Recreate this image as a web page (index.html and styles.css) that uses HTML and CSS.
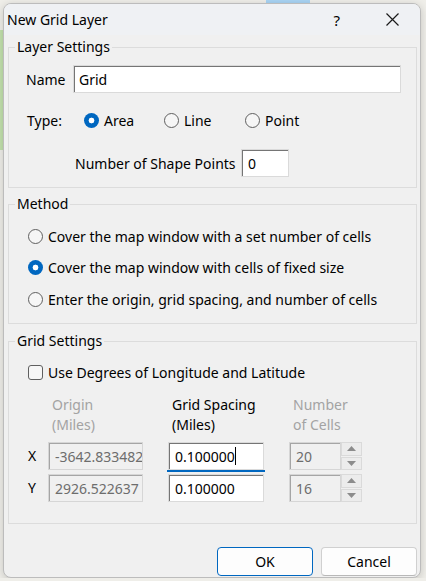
FILE: index.html
```html
<!DOCTYPE html>
<html lang="en">
<head>
    <meta charset="UTF-8">
    <meta name="viewport" content="width=device-width, initial-scale=1.0">
    <title>New Grid Layer</title>
    <link rel="stylesheet" href="styles.css">
</head>
<body>
    <div class="dialog">
        <div class="titlebar">
            <span class="title">New Grid Layer</span>
            <span class="help">?</span>
            <svg class="close" width="13" height="13" viewBox="0 0 13 13">
                <path d="M0.5 0.5 L12.5 12.5 M12.5 0.5 L0.5 12.5" stroke="#1a1a1a" stroke-width="1.2" fill="none"/>
            </svg>
        </div>

        <div class="content">
            <fieldset class="group layer">
                <legend>Layer Settings</legend>
                <div class="name-row">
                    <label class="name-label" for="layerName">Name</label>
                    <input class="edit name-edit" id="layerName" type="text" value="Grid">
                </div>
                <div class="type-row">
                    <span class="type-label">Type:</span>
                    <label class="opt opt-area"><input type="radio" name="shape" checked>Area</label>
                    <label class="opt opt-line"><input type="radio" name="shape">Line</label>
                    <label class="opt"><input type="radio" name="shape">Point</label>
                </div>
                <div class="points-row">
                    <label class="points-label" for="shapePoints">Number of Shape Points</label>
                    <input class="edit points-edit" id="shapePoints" type="text" value="0">
                </div>
            </fieldset>

            <fieldset class="group method">
                <legend>Method</legend>
                <label class="opt"><input type="radio" name="method">Cover the map window with a set number of cells</label>
                <label class="opt"><input type="radio" name="method" checked>Cover the map window with cells of fixed size</label>
                <label class="opt"><input type="radio" name="method">Enter the origin, grid spacing, and number of cells</label>
            </fieldset>

            <fieldset class="group grid">
                <legend>Grid Settings</legend>
                <label class="opt"><input type="checkbox">Use Degrees of Longitude and Latitude</label>

                <div class="coords">
                    <span></span>
                    <span class="head off">Origin<br>(Miles)</span>
                    <span class="head">Grid Spacing<br>(Miles)</span>
                    <span class="head off">Number<br>of Cells</span>

                    <span class="axis">X</span>
                    <input class="edit origin-edit" type="text" value="-3642.833482" disabled>
                    <div class="focus-wrap">
                        <input class="edit spacing-edit" type="text" value="0.100000">
                        <span class="caret"></span>
                    </div>
                    <div class="count">
                        <input class="edit count-edit" type="text" value="20" disabled>
                        <div class="spin">
                            <button class="spin-btn" disabled><svg width="9" height="5" viewBox="0 0 9 5"><path d="M0 5 L4.5 0 L9 5 Z" fill="#8c8c8c"/></svg></button>
                            <button class="spin-btn" disabled><svg width="9" height="5" viewBox="0 0 9 5"><path d="M0 0 L4.5 5 L9 0 Z" fill="#8c8c8c"/></svg></button>
                        </div>
                    </div>

                    <span class="axis">Y</span>
                    <input class="edit origin-edit" type="text" value="2926.522637" disabled>
                    <input class="edit spacing-edit" type="text" value="0.100000">
                    <div class="count">
                        <input class="edit count-edit" type="text" value="16" disabled>
                        <div class="spin">
                            <button class="spin-btn" disabled><svg width="9" height="5" viewBox="0 0 9 5"><path d="M0 5 L4.5 0 L9 5 Z" fill="#8c8c8c"/></svg></button>
                            <button class="spin-btn" disabled><svg width="9" height="5" viewBox="0 0 9 5"><path d="M0 0 L4.5 5 L9 0 Z" fill="#8c8c8c"/></svg></button>
                        </div>
                    </div>
                </div>
            </fieldset>

            <div class="buttons">
                <button class="btn btn-ok">OK</button>
                <button class="btn">Cancel</button>
            </div>
        </div>
    </div>
</body>
</html>
```

FILE: styles.css
```css
* {
    box-sizing: border-box;
}

body {
    margin: 0;
    font-family: "Noto Sans", "Liberation Sans", sans-serif;
    font-size: 14px;
    color: #000;
    background:
        linear-gradient(#c3e2ad, #c3e2ad) 0 30px / 3px 120px no-repeat,
        linear-gradient(#a9d4f4, #a9d4f4) 266px 0 / 44px 4px no-repeat,
        #efeee9;
}

.dialog {
    width: 418px;
    height: 575px;
    margin: 3px 0 0 3px;
    border: 1px solid #bcbcbc;
    border-radius: 8px;
    background: #f0f0f0;
    overflow: hidden;
    box-shadow: 0 2px 8px rgba(0, 0, 0, 0.18);
}

.titlebar {
    height: 31px;
    display: flex;
    align-items: center;
    padding-left: 3px;
    background: #eff1f4;
}

.title {
    flex: 1;
    font-size: 14px;
}

.help {
    font-size: 15px;
    margin-right: 46px;
}

.close {
    margin-right: 21px;
}

.content {
    padding: 0 3px 0 4px;
}

/* group boxes */
.group {
    margin: 0;
    padding: 0;
    border: 1px solid #dcdcdc;
    min-inline-size: 0;
}

.group legend {
    margin-left: -11px;
    padding: 0 2px;
    line-height: 20px;
    font-size: 14px;
}

.method legend,
.grid legend {
    margin-left: -13px;
}

.layer {
    margin-top: 2px;
    padding: 8px 0 10px 17px;
}

.method {
    margin-top: 6px;
    padding: 12px 0 14px 19px;
    display: flex;
    flex-direction: column;
    gap: 11.5px;
}

.grid {
    margin-top: 7px;
    padding: 11px 0 21px 19px;
}

/* text boxes */
.edit {
    height: 28px;
    margin: 0;
    padding: 0 0 0 6px;
    border: 1px solid #dadada;
    box-shadow: inset 1px 1px 0 #757575;
    background: #fff;
    font: inherit;
    font-size: 14px;
    color: #000;
    outline: none;
}

.edit:disabled {
    background: #f0f0f0;
    color: #6d6d6d;
    border-color: #d6d6d6;
    box-shadow: inset 1px 1px 0 #a5a5a5;
}

.name-row {
    display: flex;
    align-items: center;
}

.name-label {
    width: 47px;
}

.name-edit {
    width: 328px;
    padding-left: 5px;
}

.type-row {
    display: flex;
    align-items: center;
    height: 20px;
    margin-top: 17px;
    padding-left: 1px;
}

.type-label {
    width: 57px;
}

.points-row {
    display: flex;
    align-items: center;
    margin-top: 19px;
    padding-left: 49px;
}

.points-label {
    width: 166px;
}

.points-edit {
    width: 48px;
}

/* radios and checkbox */
.opt {
    display: flex;
    align-items: center;
    height: 20px;
    gap: 5px;
}

.opt-area {
    width: 80px;
}

.opt-line {
    width: 81px;
}

.opt input {
    appearance: none;
    width: 15px;
    height: 15px;
    margin: 0;
    border: 1px solid #5f5f5f;
    background: #f6f6f6;
    flex: none;
}

.opt input[type="radio"] {
    border-radius: 50%;
}

.opt input[type="radio"]:checked {
    border: none;
    background: radial-gradient(circle, #fff 0 2.6px, #0067c0 3.2px);
}

.opt input[type="checkbox"] {
    border-radius: 3px;
}

/* origin / spacing / count table */
.coords {
    display: grid;
    grid-template-columns: 20px 120px 121px 72px;
    row-gap: 4px;
    margin-top: 13px;
}

.head {
    padding-left: 4px;
    line-height: 20px;
    margin-bottom: 3px;
}

.head.off {
    color: #a3a3a3;
}

.axis {
    line-height: 28px;
}

.origin-edit {
    width: 95px;
}

.spacing-edit {
    width: 96px;
}

.focus-wrap {
    position: relative;
    width: 96px;
    height: 28px;
}

.focus-wrap::after {
    content: "";
    position: absolute;
    left: -1px;
    right: -1px;
    bottom: -2px;
    height: 2px;
    background: #0067c0;
}

.caret {
    position: absolute;
    left: 67px;
    top: 5px;
    width: 1px;
    height: 18px;
    background: #000;
}

.count {
    display: flex;
}

.count-edit {
    width: 52px;
}

.spin {
    display: flex;
    flex-direction: column;
    gap: 1px;
}

.spin-btn {
    width: 21px;
    height: 13.5px;
    margin: 0;
    padding: 0;
    border: 1px solid #dadada;
    background: #ececec;
    display: flex;
    align-items: center;
    justify-content: center;
}

/* dialog buttons */
.buttons {
    display: flex;
    justify-content: flex-end;
    gap: 8px;
    margin-top: 23px;
}

.btn {
    width: 96px;
    height: 29px;
    border: 1px solid #d0d0d0;
    border-bottom-color: #b8b8b8;
    border-radius: 4px;
    background: #fdfdfd;
    font: inherit;
    font-size: 14px;
    color: #000;
}

.btn-ok {
    border: 1px solid #0067c0;
}
```
